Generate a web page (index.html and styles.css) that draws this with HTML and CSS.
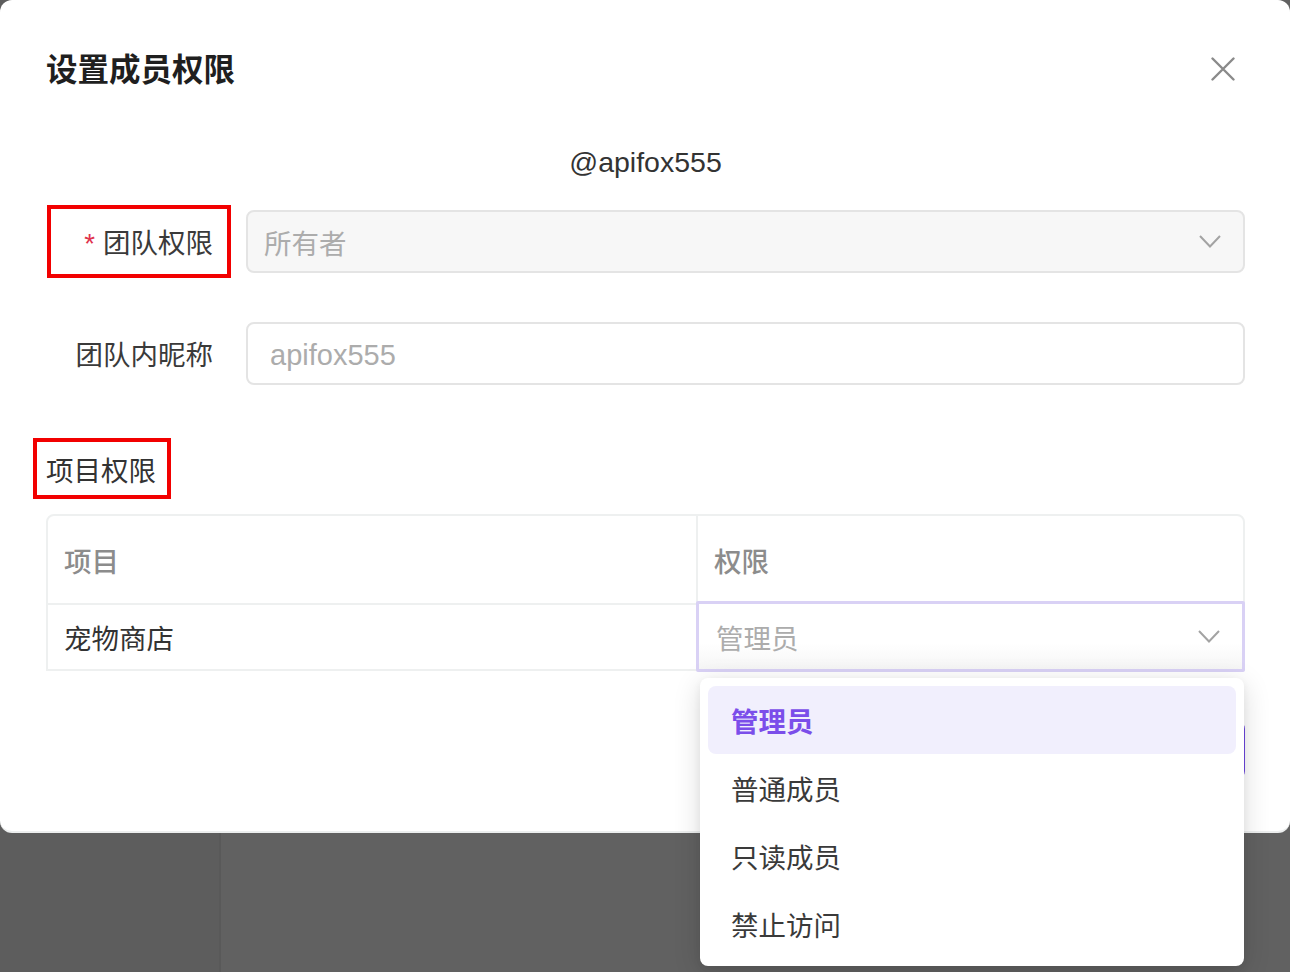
FILE: index.html
```html
<!DOCTYPE html>
<html lang="zh-CN">
<head>
<meta charset="utf-8">
<title>设置成员权限</title>
<link rel="stylesheet" href="styles.css">
</head>
<body>
<div class="modal">
  <div class="modal-header">
    <h1 class="modal-title">设置成员权限</h1>
    <button class="close-btn" aria-label="关闭">
      <svg width="24" height="24" viewBox="0 0 24 24"><path d="M1.5 1.5 L22.5 22.5 M22.5 1.5 L1.5 22.5" stroke="#8a8a8a" stroke-width="2.4" fill="none" stroke-linecap="round"/></svg>
    </button>
  </div>
  <div class="user-name">@apifox555</div>

  <div class="form-row first">
    <div class="form-label marked"><span class="required">*</span>团队权限</div>
    <div class="select disabled">
      <span class="placeholder">所有者</span>
      <svg class="chevron" width="22" height="13" viewBox="0 0 22 13"><path d="M1 1 L11 11.5 L21 1" stroke="#a3a3a3" stroke-width="2" fill="none"/></svg>
    </div>
  </div>

  <div class="form-row second">
    <div class="form-label">团队内昵称</div>
    <div class="input"><span class="placeholder latin">apifox555</span></div>
  </div>

  <div class="section-title"><span class="marked-box">项目权限</span></div>

  <div class="table">
    <div class="table-head">
      <div class="cell col-project">项目</div>
      <div class="cell col-perm">权限</div>
    </div>
    <div class="table-row">
      <div class="cell col-project body-text">宠物商店</div>
      <div class="cell col-perm select-cell">
        <div class="row-select">
          <span class="placeholder">管理员</span>
          <svg class="chevron" width="22" height="13" viewBox="0 0 22 13"><path d="M1 1 L11 11.5 L21 1" stroke="#a3a3a3" stroke-width="2" fill="none"/></svg>
        </div>
        <ul class="dropdown">
          <li class="option selected">管理员</li>
          <li class="option">普通成员</li>
          <li class="option">只读成员</li>
          <li class="option">禁止访问</li>
        </ul>
      </div>
    </div>
  </div>

  <div class="modal-footer">
    <button class="btn btn-cancel">取消</button>
    <button class="btn btn-primary">确定</button>
  </div>
</div>
</body>
</html>
```

FILE: styles.css
```css
* {
  box-sizing: border-box;
}

html, body {
  margin: 0;
  padding: 0;
}

body {
  width: 1290px;
  height: 972px;
  overflow: hidden;
  font-family: "Liberation Sans", "Noto Sans CJK SC", sans-serif;
  font-size: 28px;
  color: #333;
  background: linear-gradient(to right, #5d5d5d 0, #5d5d5d 219px, #595959 219px, #595959 221px, #616161 221px);
}

.modal {
  width: 1290px;
  height: 833px;
  background: #fff;
  border-radius: 12px;
  border-bottom: 2px solid #eceeee;
  padding: 0 45px 0 46px;
  display: flex;
  flex-direction: column;
}

.modal-header {
  height: 138px;
  display: flex;
  align-items: center;
  justify-content: space-between;
  padding-bottom: 4px;
}

.modal-title {
  margin: 0;
  font-family: "Noto Sans CJK SC", sans-serif;
  font-size: 31.5px;
  font-weight: 600;
  color: #1f1f1f;
  line-height: 40px;
}

.close-btn {
  border: 0;
  background: none;
  padding: 0;
  margin-right: 10px;
  margin-top: 4px;
  width: 24px;
  height: 24px;
  display: flex;
}

.user-name {
  text-align: center;
  font-size: 28.5px;
  line-height: 48px;
  color: #333;
}

.form-row {
  display: flex;
  align-items: center;
  height: 63px;
}

.form-row.first {
  margin-top: 24px;
}

.form-row.second {
  margin-top: 49px;
}

.form-label {
  width: 186px;
  flex: none;
  padding-right: 19px;
  text-align: right;
  font-family: "Noto Sans CJK SC", sans-serif;
  font-size: 27.5px;
  color: #3a3a3a;
  margin-right: 14px;
  position: relative;
  height: 63px;
  line-height: 63px;
}

.form-label.marked::after {
  content: "";
  position: absolute;
  left: 1px;
  right: 1px;
  top: -5px;
  bottom: -5px;
  border: 4px solid #f20000;
}

.required {
  color: #e0334d;
  margin-right: 8px;
  font-family: "Liberation Sans", sans-serif;
}

.select, .input {
  flex: 1;
  height: 63px;
  border: 2px solid #e4e4e4;
  border-radius: 8px;
  display: flex;
  align-items: center;
  justify-content: space-between;
  padding: 0 22px 0 16px;
}

.select.disabled {
  background: #f7f7f7;
}

.input {
  padding-left: 22px;
}

.placeholder {
  font-family: "Noto Sans CJK SC", sans-serif;
  color: #acacac;
  font-size: 27.5px;
}

.placeholder.latin {
  font-family: "Liberation Sans", sans-serif;
  font-size: 29px;
  padding-top: 4px;
}

.section-title {
  margin-top: 63px;
  height: 40px;
  display: flex;
  align-items: center;
}

.marked-box {
  font-family: "Noto Sans CJK SC", sans-serif;
  font-size: 27.5px;
  color: #333;
  outline: 4px solid #f20000;
  outline-offset: 0;
  padding: 9px 11px 8px 9px;
  margin-left: -9px;
  line-height: 36px;
}

.table {
  margin-top: 26px;
  border: 2px solid #eef0f0;
  border-radius: 8px 8px 0 0;
}

.table-head, .table-row {
  display: flex;
}

.table-head {
  height: 89px;
  border-bottom: 2px solid #eef0f0;
}

.table-row {
  height: 64px;
}

.cell {
  display: flex;
  align-items: center;
  font-family: "Noto Sans CJK SC", sans-serif;
  font-size: 27.5px;
}

.col-project {
  width: 650px;
  padding-left: 16px;
  border-right: 2px solid #eef0f0;
}

.col-perm {
  flex: 1;
  padding-left: 16px;
}

.table-head .cell {
  color: #8c8c8c;
  font-weight: 500;
}

.body-text {
  color: #333;
}

.select-cell {
  padding: 0;
  position: relative;
  border-right: none;
}

.row-select {
  position: relative;
  margin: -4px -2px -3px -2px;
  height: 71px;
  flex: 1;
  border: 3px solid #d9d1f5;
  border-radius: 2px;
  display: flex;
  align-items: center;
  justify-content: space-between;
  padding: 0 22px 0 17px;
  background: linear-gradient(to bottom, #fff 60%, #f6f6f6 100%);
}

.dropdown {
  position: absolute;
  left: 2px;
  top: 73px;
  width: 544px;
  margin: 0;
  padding: 8px;
  list-style: none;
  background: #fff;
  border-radius: 8px;
  box-shadow: 0 6px 28px rgba(0, 0, 0, 0.14), 0 3px 8px rgba(0, 0, 0, 0.06);
  z-index: 10;
}

.option {
  height: 68px;
  line-height: 68px;
  padding-left: 23px;
  font-family: "Noto Sans CJK SC", sans-serif;
  font-size: 27.5px;
  color: #3a3a3a;
  border-radius: 8px;
}

.option.selected {
  background: #f1effd;
  color: #7b4eea;
  font-weight: 600;
}

.modal-footer {
  margin-top: 50px;
  display: flex;
  justify-content: flex-end;
  gap: 16px;
}

.btn {
  height: 58px;
  border-radius: 8px;
  font-family: "Noto Sans CJK SC", sans-serif;
  font-size: 27px;
  padding: 0 30px;
  border: 2px solid #ddd;
  background: #fff;
  color: #333;
}

.btn-primary {
  background: #6c46e0;
  border-color: #6c46e0;
  color: #fff;
}
```
